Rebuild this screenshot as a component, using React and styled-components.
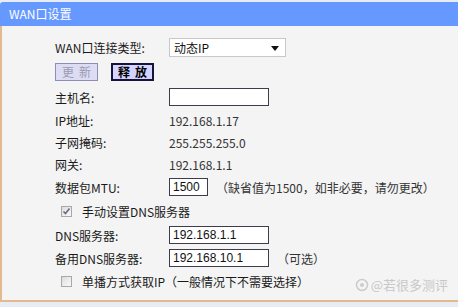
import styled, { createGlobalStyle } from 'styled-components';

const GlobalStyle = createGlobalStyle`
  html, body {
    margin: 0;
    padding: 0;
    background: #ffffff;
  }
  body {
    font-family: "Noto Sans CJK SC", "Liberation Sans", sans-serif;
    font-size: 12px;
    color: #222;
  }
`;

const Page = styled.div`
  width: 458px;
  height: 307px;
  padding-top: 2px;
  background: #e8ecf4;
  box-sizing: border-box;
  overflow: hidden;
`;

const Header = styled.div`
  height: 24px;
  line-height: 24px;
  padding-left: 9px;
  background: #6699ff;
  color: #ffffff;
  font-size: 12px;
  border-top-left-radius: 3px;
`;

const Panel = styled.div`
  height: 276px;
  box-sizing: border-box;
  background: #f4f4f4;
  border-left: 2px solid #e3b98f;
  border-bottom: 2px solid #e3b98f;
  padding: 10px 0 0 53px;
  position: relative;
`;

const Row = styled.div`
  display: grid;
  grid-template-columns: 114px 1fr;
  align-items: center;
  height: ${(p) => p.$h || 22}px;
`;

const Label = styled.span`
  color: #1a1a1a;
  white-space: nowrap;
`;

const Value = styled.div`
  display: flex;
  align-items: center;
  gap: 8px;
  color: #333;
  white-space: nowrap;
`;

const Select = styled.div`
  width: 117px;
  height: 19px;
  box-sizing: border-box;
  border: 1px solid #c8c8c8;
  background: #ffffff;
  display: flex;
  align-items: center;
  justify-content: space-between;
  padding: 0 6px 0 4px;
  color: #111;
`;

const Arrow = styled.span`
  width: 0;
  height: 0;
  border-left: 4px solid transparent;
  border-right: 4px solid transparent;
  border-top: 5px solid #111;
  margin-top: 2px;
`;

const Buttons = styled.div`
  display: flex;
  gap: 13px;
  align-items: center;
`;

const Btn = styled.button`
  width: 43px;
  height: 18px;
  box-sizing: border-box;
  padding: 0;
  font-family: inherit;
  font-size: 12px;
  line-height: 14px;
  white-space: nowrap;
  letter-spacing: 5px;
  text-indent: 5px;
  background: ${(p) => (p.$disabled ? '#dcdcf4' : '#d4d4ff')};
  border: ${(p) => (p.$disabled ? '1px solid #8c8cb4' : '2px solid #14143c')};
  color: ${(p) => (p.$disabled ? '#9a9ab0' : '#000')};
  font-weight: ${(p) => (p.$disabled ? 400 : 600)};
`;

const Input = styled.div`
  width: ${(p) => p.$w || 100}px;
  height: 18px;
  box-sizing: border-box;
  border: 1px solid #3c3c4c;
  background: #ffffff;
  padding-left: 3px;
  font-family: "Liberation Sans", sans-serif;
  font-size: 12px;
  line-height: 16px;
  color: #111;
`;

const CheckRow = styled.div`
  display: flex;
  align-items: center;
  gap: 10px;
  padding-left: 6px;
  height: ${(p) => p.$h || 22}px;
`;

const Box = styled.span`
  width: 11px;
  height: 11px;
  box-sizing: border-box;
  border: 1px solid #a8a8a8;
  background: linear-gradient(135deg, #dcdcdc, #fafafa);
  display: flex;
  align-items: center;
  justify-content: center;
`;

const Watermark = styled.div`
  position: absolute;
  right: 10px;
  bottom: 6px;
  display: flex;
  align-items: center;
  gap: 2px;
  color: #c4c4c4;
  font-size: 13px;
  opacity: 0.9;
`;

function Check({ checked }) {
  return (
    <Box>
      {checked && (
        <svg width="9" height="9" viewBox="0 0 9 9">
          <path d="M1.5 4.5 L3.5 6.5 L7.5 1.5" fill="none" stroke="#6a6a8a" strokeWidth="1.6" />
        </svg>
      )}
    </Box>
  );
}

export default function App() {
  return (
    <>
      <GlobalStyle />
      <Page>
        <Header>WAN口设置</Header>
        <Panel>
          <Row $h={22}>
            <Label>WAN口连接类型:</Label>
            <Select>
              <span>动态IP</span>
              <Arrow />
            </Select>
          </Row>
          <Row $h={27}>
            <Buttons>
              <Btn $disabled>更新</Btn>
              <Btn>释放</Btn>
            </Buttons>
          </Row>
          <Row $h={24}>
            <Label>主机名:</Label>
            <Input $w={100} />
          </Row>
          <Row>
            <Label>IP地址:</Label>
            <Value>192.168.1.17</Value>
          </Row>
          <Row>
            <Label>子网掩码:</Label>
            <Value>255.255.255.0</Value>
          </Row>
          <Row>
            <Label>网关:</Label>
            <Value>192.168.1.1</Value>
          </Row>
          <Row $h={24}>
            <Label>数据包MTU:</Label>
            <Value>
              <Input $w={39}>1500</Input>
              <span>（缺省值为1500，如非必要，请勿更改）</span>
            </Value>
          </Row>
          <CheckRow $h={25}>
            <Check checked />
            <Label>手动设置DNS服务器</Label>
          </CheckRow>
          <Row>
            <Label>DNS服务器:</Label>
            <Input $w={100}>192.168.1.1</Input>
          </Row>
          <Row $h={24}>
            <Label>备用DNS服务器:</Label>
            <Value>
              <Input $w={100}>192.168.10.1</Input>
              <span>（可选）</span>
            </Value>
          </Row>
          <CheckRow>
            <Check />
            <Label>单播方式获取IP（一般情况下不需要选择）</Label>
          </CheckRow>
          <Watermark>
            <svg width="14" height="14" viewBox="0 0 14 14">
              <circle cx="7" cy="7" r="5.5" fill="none" stroke="#c8c8c8" strokeWidth="1.5" />
              <circle cx="7" cy="7" r="2" fill="#c8c8c8" />
            </svg>
            <span>@若很多测评</span>
          </Watermark>
        </Panel>
      </Page>
    </>
  );
}
